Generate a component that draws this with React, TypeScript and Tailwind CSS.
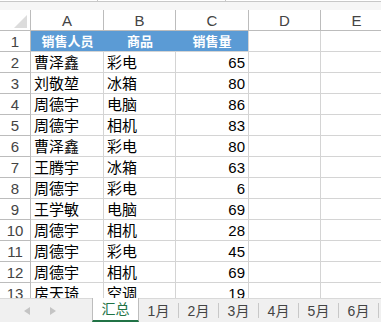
import React from "react";

const rows: [string, string, number][] = [
  ["曹泽鑫", "彩电", 65],
  ["刘敬堃", "冰箱", 80],
  ["周德宇", "电脑", 86],
  ["周德宇", "相机", 83],
  ["曹泽鑫", "彩电", 80],
  ["王腾宇", "冰箱", 63],
  ["周德宇", "彩电", 6],
  ["王学敏", "电脑", 69],
  ["周德宇", "相机", 28],
  ["周德宇", "彩电", 45],
  ["周德宇", "相机", 69],
  ["房天琦", "空调", 19],
];

const font = { fontFamily: "'Liberation Sans', 'Noto Sans CJK SC', sans-serif" };

export default function App() {
  const cols = "grid grid-cols-[31px_73px_72px_73px_72px_72px]";
  return (
    <div className="w-[381px] h-[322px] overflow-hidden bg-white flex flex-col" style={font}>
      <div className="h-[298px] overflow-hidden flex flex-col">
        {/* top strip */}
        <div className="h-[10px] shrink-0 bg-[#f6f6f6] flex items-start">
          <div className="w-[98px] h-[2px] border-b border-r border-[#c8c8c8] bg-white" />
          <div className="w-[128px] h-[2px] border-b border-r border-[#c8c8c8] bg-white" />
          <div className="flex-1 h-[2px] border-b border-[#c8c8c8] bg-white" />
        </div>
        {/* column header */}
        <div className={`${cols} h-[21px] shrink-0 bg-white text-[15px] text-[#444]`}>
          <div className="border-r border-b border-[#bcbcbc] flex items-end justify-end pr-[3px] pb-[2px]">
            <svg width="13" height="13" viewBox="0 0 13 13">
              <polygon points="13,0 13,13 0,13" fill="#dcdcdc" />
            </svg>
          </div>
          {["A", "B", "C", "D", "E"].map((c) => (
            <div key={c} className="border-r border-b border-[#bcbcbc] flex items-center justify-center leading-none">
              {c}
            </div>
          ))}
        </div>
        {/* row 1 */}
        <div className={`${cols} h-[21px] shrink-0 text-[15px]`}>
          <div className="border-r border-b border-[#bcbcbc] flex items-center justify-center text-[#444] leading-none">1</div>
          <div className="bg-[#5b9bd5] border-b border-[#d4d4d4] flex items-center justify-center text-white font-bold text-[13px] leading-none">销售人员</div>
          <div className="bg-[#5b9bd5] border-b border-[#d4d4d4] flex items-center justify-center text-white font-bold text-[13px] leading-none">商品</div>
          <div className="bg-[#5b9bd5] border-b border-r border-[#d4d4d4] flex items-center justify-center text-white font-bold text-[13px] leading-none">销售量</div>
          <div className="border-r border-b border-[#d4d4d4]" />
          <div className="border-r border-b border-[#d4d4d4]" />
        </div>
        {rows.map(([name, item, qty], i) => (
          <div key={i} className={`${cols} h-[21px] shrink-0 text-[15px] text-black`}>
            <div className="border-r border-b border-[#bcbcbc] flex items-center justify-center text-[#444] leading-none">{i + 2}</div>
            <div className="border-r border-b border-[#d4d4d4] flex items-center pl-[3px] leading-none">{name}</div>
            <div className="border-r border-b border-[#d4d4d4] flex items-center pl-[3px] leading-none">{item}</div>
            <div className="border-r border-b border-[#d4d4d4] flex items-center justify-end pr-[3px] leading-none">{qty}</div>
            <div className="border-r border-b border-[#d4d4d4]" />
            <div className="border-r border-b border-[#d4d4d4]" />
          </div>
        ))}
      </div>
      {/* tab bar */}
      <div className="h-[24px] shrink-0 bg-[#f0f0f0] border-t border-[#d9d9d9] flex items-stretch text-[14px] text-[#444]">
        <div className="w-[92px] flex items-center pl-[24px] gap-[20px]">
          <svg width="6" height="8" viewBox="0 0 6 8"><polygon points="6,0 6,8 0,4" fill="#c4c4c4" /></svg>
          <svg width="6" height="8" viewBox="0 0 6 8"><polygon points="0,0 0,8 6,4" fill="#c4c4c4" /></svg>
        </div>
        <div className="w-[47px] -mt-px bg-white border-l border-r border-[#bdbdbd] border-b-2 border-b-[#217346] flex items-center justify-center text-[#217346] leading-none">汇总</div>
        {["1月", "2月", "3月", "4月", "5月", "6月"].map((t) => (
          <div key={t} className="w-[40px] flex items-center justify-center leading-none">
            <div className="flex-1 text-center">{t}</div>
            <div className="w-px h-[15px] bg-[#c8c8c8]" />
          </div>
        ))}
      </div>
    </div>
  );
}
